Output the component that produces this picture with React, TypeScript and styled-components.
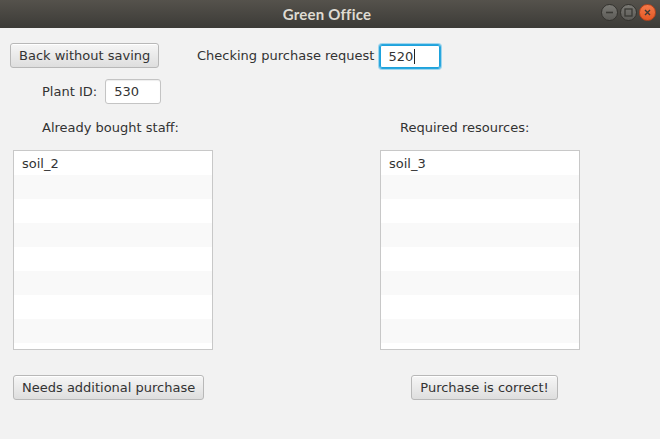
import React from "react";
import styled, { createGlobalStyle } from "styled-components";

const Global = createGlobalStyle`
  html, body { margin: 0; padding: 0; background: #f2f2f2; }
  #root { width: 660px; height: 439px; }
`;

const Window = styled.div`
  width: 660px;
  height: 439px;
  display: flex;
  flex-direction: column;
  background: #f2f2f2;
  overflow: hidden;
`;

const TitleBar = styled.div`
  height: 28px;
  flex: none;
  position: relative;
  display: flex;
  align-items: center;
  justify-content: center;
  background: linear-gradient(#55524c, #3c3b37);
`;

const Title = styled.span`
  font-family: "Lato", "DejaVu Sans", sans-serif;
  font-weight: 700;
  font-size: 15px;
  color: #dfdbd2;
  letter-spacing: 0.2px;
  margin-right: 6px;
`;

const Controls = styled.div`
  position: absolute;
  right: 4px;
  top: 4px;
  display: flex;
  gap: 2px;
`;

const CtrlBtn = styled.div<{ $close?: boolean }>`
  width: 17px;
  height: 17px;
  border-radius: 50%;
  box-sizing: border-box;
  border: 1px solid ${(p) => (p.$close ? "#b7431c" : "#34332f")};
  background: ${(p) =>
    p.$close
      ? "linear-gradient(#f47a4a, #e45824)"
      : "linear-gradient(#7a7974, #5c5b57)"};
  display: flex;
  align-items: center;
  justify-content: center;
`;

const Content = styled.div`
  flex: 1;
  display: flex;
  flex-direction: column;
  font-family: "DejaVu Sans", sans-serif;
  font-size: 13px;
  color: #333;
`;

const TopRow = styled.div`
  display: flex;
  align-items: center;
  padding: 14px 0 0 10px;
`;

const PlantRow = styled.div`
  display: flex;
  align-items: center;
  padding: 10px 0 0 42px;
  gap: 8px;
`;

const Label = styled.span<{ $ml?: number }>`
  margin-left: ${(p) => p.$ml ?? 0}px;
  white-space: nowrap;
  line-height: 16px;
`;

const Button = styled.button<{ $w?: number }>`
  height: 25px;
  box-sizing: border-box;
  padding: 0 8px;
  font-family: "DejaVu Sans", sans-serif;
  font-size: 13px;
  color: #333;
  border: 1px solid #b8b8b8;
  border-radius: 3px;
  background: linear-gradient(#f6f6f6, #dedede);
  box-shadow: inset 0 1px 0 #ffffff;
  white-space: nowrap;
  cursor: default;
  ${(p) => (p.$w ? `width: ${p.$w}px;` : "")}
`;

const Field = styled.div<{ $w: number; $focused?: boolean }>`
  width: ${(p) => p.$w}px;
  height: 25px;
  box-sizing: border-box;
  display: flex;
  align-items: center;
  padding-left: 8px;
  background: #fff;
  border-radius: 3px;
  border: 1px solid ${(p) => (p.$focused ? "#2aa7de" : "#c4c4c4")};
  box-shadow: ${(p) =>
    p.$focused ? "0 0 0 1px #9fd6ee, inset 0 0 0 1px #1da2dc" : "inset 0 1px 1px #eee"};
`;

const Caret = styled.span`
  display: inline-block;
  width: 1px;
  height: 15px;
  background: #222;
  margin-left: 1px;
`;

const Columns = styled.div`
  display: grid;
  grid-template-columns: 200px 200px;
  column-gap: 167px;
  padding: 16px 0 0 13px;
`;

const Column = styled.div`
  display: flex;
  flex-direction: column;
  align-items: flex-start;
`;

const ListView = styled.div`
  margin-top: 14px;
  width: 200px;
  height: 200px;
  box-sizing: border-box;
  border: 1px solid #c8c8c8;
  background: #fff;
  overflow: hidden;
`;

const Cell = styled.div<{ $odd: boolean }>`
  height: 24px;
  box-sizing: border-box;
  padding: 0 8px;
  display: flex;
  align-items: center;
  background: ${(p) => (p.$odd ? "#f9f9f9" : "#ffffff")};
`;

const Bottom = styled.div<{ $ml: number }>`
  margin-top: 25px;
  margin-left: ${(p) => p.$ml}px;
`;

const Minimize = () => (
  <svg width="9" height="9" viewBox="0 0 9 9">
    <path d="M1 4.5h7" stroke="#3a3935" strokeWidth="1.6" />
  </svg>
);
const Maximize = () => (
  <svg width="9" height="9" viewBox="0 0 9 9">
    <rect x="1" y="1" width="7" height="7" fill="none" stroke="#3a3935" strokeWidth="1.3" />
  </svg>
);
const CloseX = () => (
  <svg width="9" height="9" viewBox="0 0 9 9">
    <path d="M2 2l5 5M7 2l-5 5" stroke="#3c3b37" strokeWidth="1.4" />
  </svg>
);

const List = ({ items }: { items: string[] }) => (
  <ListView>
    {Array.from({ length: 9 }).map((_, i) => (
      <Cell key={i} $odd={i % 2 === 1}>
        {items[i] ?? ""}
      </Cell>
    ))}
  </ListView>
);

export default function App() {
  return (
    <>
      <Global />
      <Window>
        <TitleBar>
          <Title>Green Office</Title>
          <Controls>
            <CtrlBtn>
              <Minimize />
            </CtrlBtn>
            <CtrlBtn>
              <Maximize />
            </CtrlBtn>
            <CtrlBtn $close>
              <CloseX />
            </CtrlBtn>
          </Controls>
        </TitleBar>
        <Content>
          <TopRow>
            <Button $w={149}>Back without saving</Button>
            <Label $ml={38}>Checking purchase request</Label>
            <Field $w={62} $focused style={{ marginLeft: 5, marginTop: 2 }}>
              520
              <Caret />
            </Field>
          </TopRow>
          <PlantRow>
            <Label>Plant ID:</Label>
            <Field $w={56}>530</Field>
          </PlantRow>
          <Columns>
            <Column>
              <Label $ml={29}>Already bought staff:</Label>
              <List items={["soil_2"]} />
              <Bottom $ml={0}>
                <Button $w={191}>Needs additional purchase</Button>
              </Bottom>
            </Column>
            <Column>
              <Label $ml={20}>Required resources:</Label>
              <List items={["soil_3"]} />
              <Bottom $ml={31}>
                <Button $w={147}>Purchase is correct!</Button>
              </Bottom>
            </Column>
          </Columns>
        </Content>
      </Window>
    </>
  );
}
